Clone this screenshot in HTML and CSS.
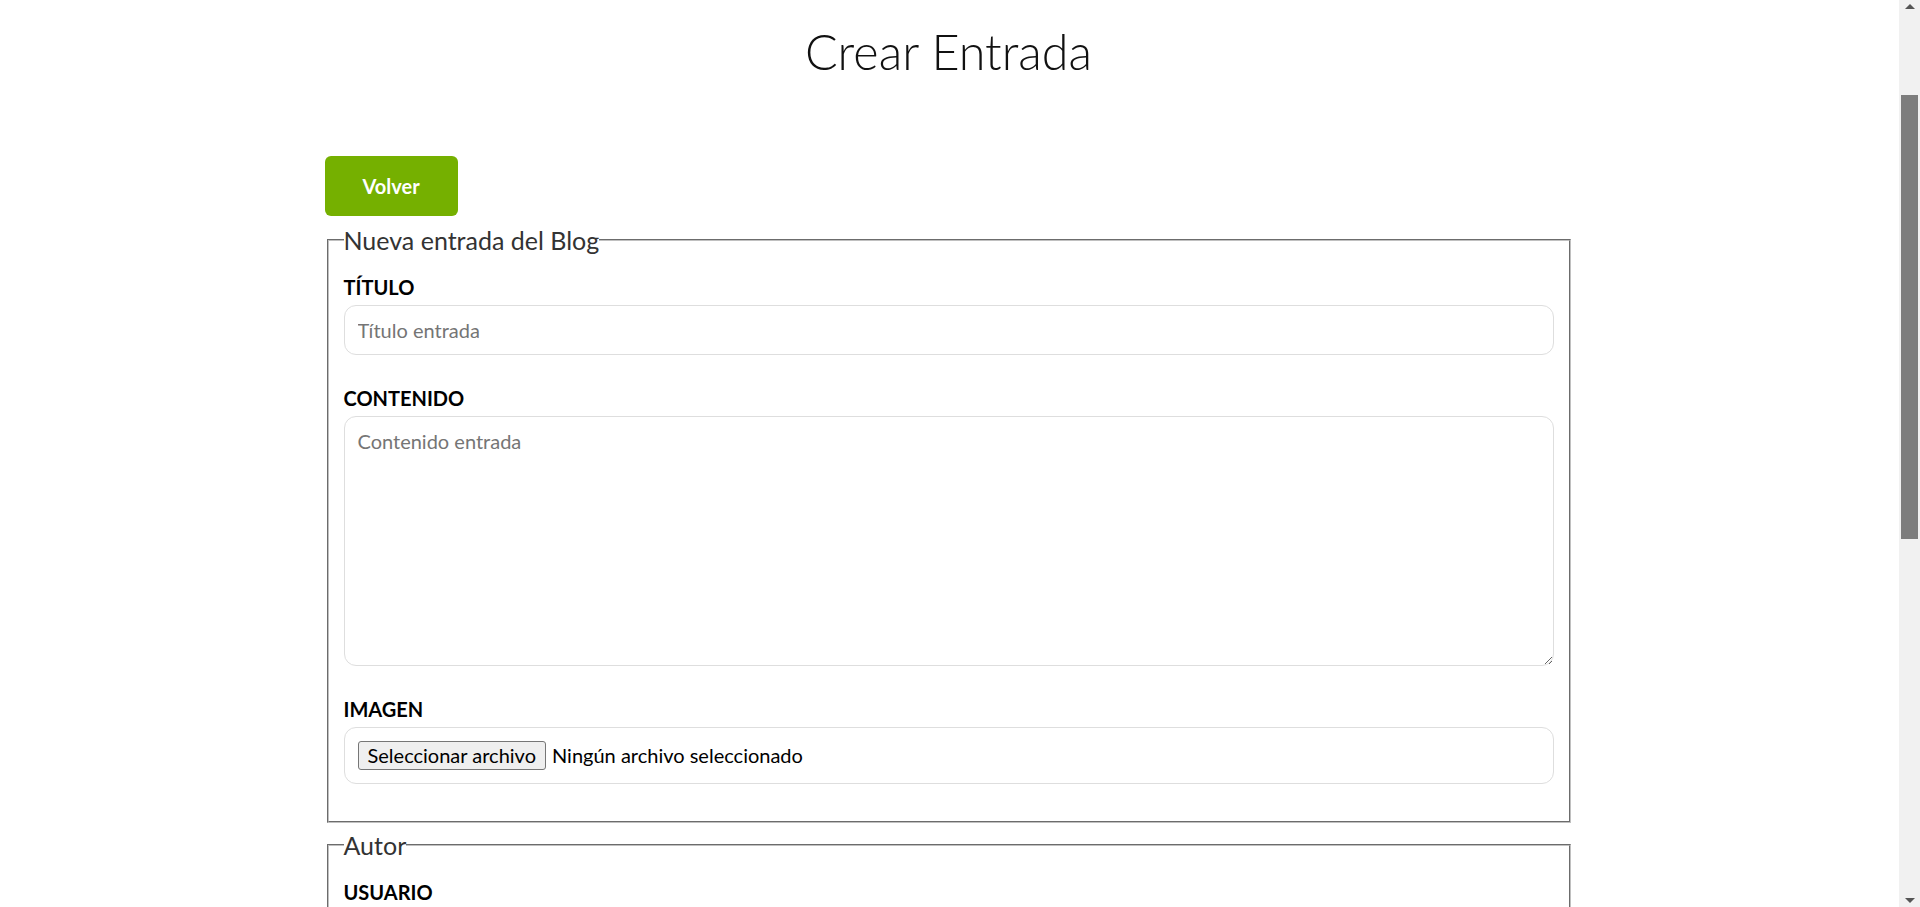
FILE: index.html
```html
<!DOCTYPE html>
<html lang="es">
<head>
<meta charset="utf-8">
<title>Crear Entrada</title>
<link rel="stylesheet" href="styles.css">
</head>
<body>
<main class="container">
  <h1 class="page-title">Crear Entrada</h1>
  <div class="actions">
    <a class="btn btn-green" href="#">Volver</a>
  </div>
  <form class="form">
    <fieldset class="box">
      <legend class="box-legend">Nueva entrada del Blog</legend>
      <div class="field">
        <label class="field-label" for="titulo">TÍTULO</label>
        <input class="field-input" id="titulo" type="text" placeholder="Título entrada">
      </div>
      <div class="field">
        <label class="field-label" for="contenido">CONTENIDO</label>
        <textarea class="field-input field-textarea" id="contenido" placeholder="Contenido entrada"></textarea>
      </div>
      <div class="field">
        <span class="field-label">IMAGEN</span>
        <label class="file-box" for="imagen">
          <span class="file-btn">Seleccionar archivo</span>
          <span class="file-name">Ningún archivo seleccionado</span>
        </label>
        <input class="file-hidden" id="imagen" type="file">
      </div>
    </fieldset>
    <fieldset class="box">
      <legend class="box-legend">Autor</legend>
      <div class="field">
        <label class="field-label" for="usuario">USUARIO</label>
        <input class="field-input" id="usuario" type="text" placeholder="Nombre de usuario">
      </div>
      <div class="field">
        <label class="field-label" for="email">EMAIL</label>
        <input class="field-input" id="email" type="email" placeholder="Email del autor">
      </div>
    </fieldset>
    <div class="actions">
      <button class="btn btn-green" type="submit">Crear</button>
    </div>
  </form>
</main>
<div class="scrollbar" aria-hidden="true">
  <span class="scroll-arrow scroll-arrow-up"></span>
  <span class="scroll-thumb"></span>
  <span class="scroll-arrow scroll-arrow-down"></span>
</div>
</body>
</html>
```
FILE: styles.css
```css
body {
  margin: 0;
  padding-right: 23px;
  background: #ffffff;
  color: #000000;
  font-family: Lato, "Open Sans", "Liberation Sans", sans-serif;
}
.container {
  width: 1248px;
  margin: 0 auto;
  padding-bottom: 60px;
}
.page-title {
  margin: 22px 0 76px;
  font-size: 48.5px;
  font-weight: 300;
  line-height: 58px;
  text-align: center;
  color: #111111;
}
.actions {
  display: flex;
  margin-bottom: 9px;
}
.btn {
  display: block;
  padding: 18px 38px;
  border: 0;
  border-radius: 6px;
  font-family: inherit;
  font-size: 20px;
  font-weight: 700;
  line-height: 24px;
  text-decoration: none;
  cursor: pointer;
}
.btn-green {
  background: #75b000;
  color: #ffffff;
}
.box {
  margin: 0 2px 7px;
  padding: 20px 15px 6px;
  border: 2px groove #c0c0c0;
}
.box-legend {
  padding: 0;
  font-size: 25px;
  line-height: 30px;
  color: #333333;
}
.field {
  margin-bottom: 31px;
}
.field-label {
  display: block;
  margin-bottom: 6px;
  font-size: 20px;
  font-weight: 700;
  line-height: 24px;
}
.field-input {
  display: block;
  box-sizing: border-box;
  width: 100%;
  margin: 0;
  padding: 12px 13px;
  border: 1px solid #dedede;
  border-radius: 12px;
  background: #ffffff;
  font-family: inherit;
  font-size: 20px;
  line-height: 24px;
  color: #000000;
  outline: none;
}
.field-input::placeholder {
  color: #757575;
}
.field-textarea {
  height: 250px;
  resize: vertical;
}
.file-box {
  display: flex;
  align-items: center;
  gap: 6px;
  box-sizing: border-box;
  height: 57px;
  padding: 0 13px;
  border: 1px solid #dedede;
  border-radius: 12px;
  font-size: 20px;
  line-height: 25px;
  cursor: pointer;
}
.file-btn {
  padding: 1px 9px;
  border: 1px solid #767676;
  border-radius: 3px;
  background: #efefef;
  color: #000000;
}
.file-name {
  color: #000000;
}
.file-hidden {
  display: none;
}
.scrollbar {
  position: fixed;
  top: 0;
  right: 0;
  width: 21px;
  height: 100%;
  background: #f1f1f1;
}
.scroll-thumb {
  position: absolute;
  top: 95px;
  left: 2px;
  width: 17px;
  height: 444px;
  background: #7d7d7d;
}
.scroll-arrow {
  position: absolute;
  left: 6px;
  width: 0;
  height: 0;
  border-left: 5px solid transparent;
  border-right: 5px solid transparent;
}
.scroll-arrow-up {
  top: 4px;
  border-bottom: 5px solid #555555;
}
.scroll-arrow-down {
  bottom: 4px;
  border-top: 5px solid #555555;
}
```
